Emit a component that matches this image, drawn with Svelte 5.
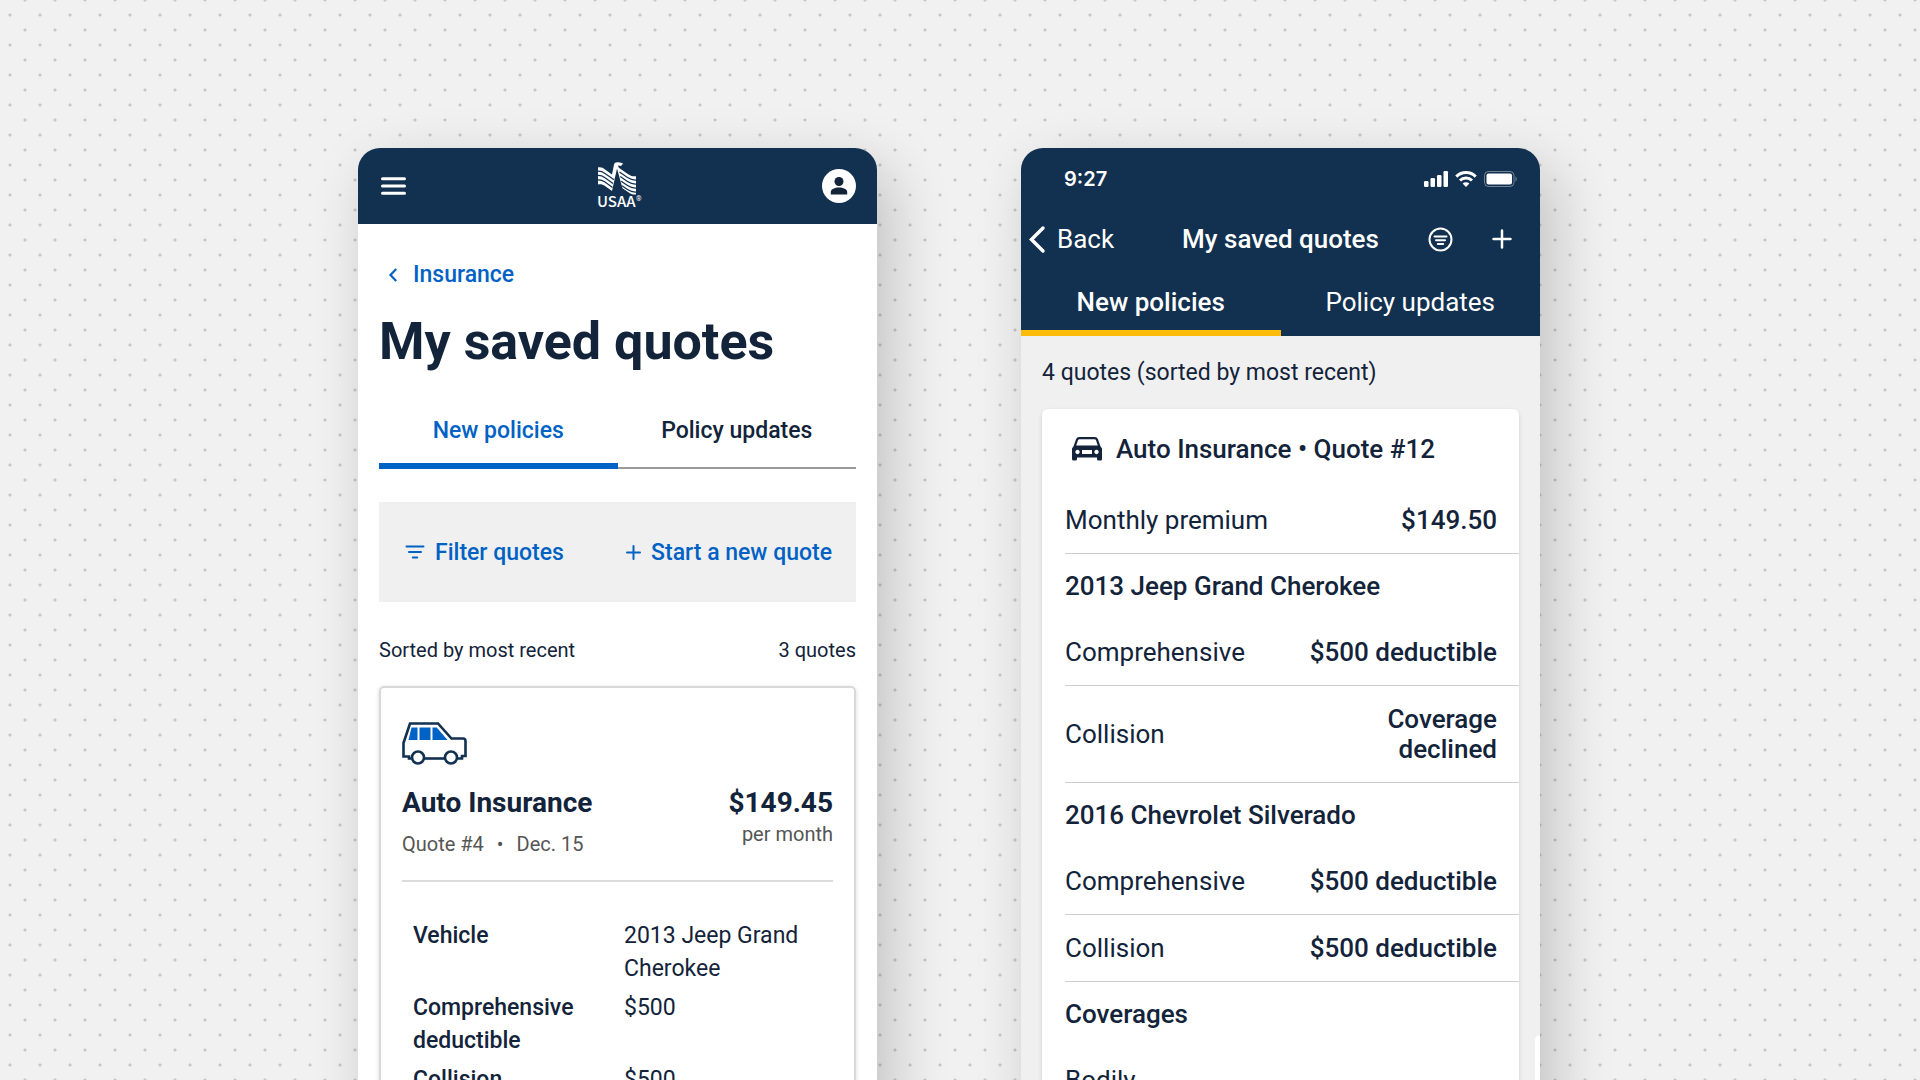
<script lang="ts">
	type Row = { label: string; value: string; wrap?: boolean };
	type Section = { title?: string; rows: Row[] };

	const tabs = ['New policies', 'Policy updates'];
	let webTab = $state(0);
	let appTab = $state(0);

	const details: Row[] = [
		{ label: 'Vehicle', value: '2013 Jeep Grand Cherokee' },
		{ label: 'Comprehensive deductible', value: '$500' },
		{ label: 'Collision deductible', value: '$500' }
	];

	const sections: Section[] = [
		{ rows: [{ label: 'Monthly premium', value: '$149.50' }] },
		{
			title: '2013 Jeep Grand Cherokee',
			rows: [
				{ label: 'Comprehensive', value: '$500 deductible' },
				{ label: 'Collision', value: 'Coverage declined', wrap: true }
			]
		},
		{
			title: '2016 Chevrolet Silverado',
			rows: [
				{ label: 'Comprehensive', value: '$500 deductible' },
				{ label: 'Collision', value: '$500 deductible' }
			]
		},
		{ title: 'Coverages', rows: [{ label: 'Bodily injury', value: '', wrap: true }] }
	];
</script>

<div class="stage">
	<section class="phone web">
		<header class="web-bar">
			<button class="icon-btn" aria-label="Menu">
				<svg width="25" height="18" viewBox="0 0 25 18" stroke="#fff" stroke-width="3" stroke-linecap="round">
					<path d="M1.5 1.7h22M1.5 9h22M1.5 16.3h22" />
				</svg>
			</button>
			<svg class="logo" width="44" height="48" viewBox="0 0 44 48" role="img" aria-label="USAA">
				<path fill="#fff" d="M1 5.5c3-.6 5 .5 7 1.900l7 5L17 2.500C17.500.8 19 0 21 .3c2.500.2 4 .5 5.500 2-1.500 0-2.300.5-2.100 1.700L21 3.500l.8 2.200 9 6.200c3 2 5.200 2.600 8.200 2.400v18.200c-3 .3-5-.5-8-2.500l-5.500-3.700L20 6.500l-5 22.400-7-4.900c-2-1.400-4-1.900-7-1.500z" />
				<g fill="none" stroke="#12304f" stroke-width="1.200">
					<path d="M0 9.300c3-.5 5.500.4 8 2.100l9 6.300M0 13.600c3-.5 5.500.4 8 2.100l8 5.700M0 18c3-.5 5.500.4 8 2.100l7.500 5.300" />
					<path d="M22.500 10l8 5.600c3 2 5.500 2.800 9 2.500M23.300 14.600l7.200 5c3 2 5.500 2.800 9 2.500M24.200 19.200l6.300 4.400c3 2 5.500 2.800 9 2.500M25 23.800l5.500 3.800c3 2 5.500 2.800 9 2.500" />
				</g>
				<text x="0" y="45" class="logo-name">USAA</text>
				<text x="39" y="39" class="logo-mark">®</text>
			</svg>
			<button class="icon-btn" aria-label="Profile">
				<svg width="34" height="34" viewBox="0 0 34 34">
					<circle cx="17" cy="17" r="17" fill="#fff" />
					<circle cx="17" cy="12.500" r="4.500" fill="#12233a" />
					<path fill="#12233a" d="M8.800 25.500v-2.500c0-3 4-4.500 8.200-4.500s8.200 1.500 8.200 4.500v2.500z" />
				</svg>
			</button>
		</header>

		<main class="web-main">
			<a class="crumb" href="#insurance">
				<svg width="8" height="14" viewBox="0 0 8 14" fill="none" stroke="currentColor" stroke-width="2.200">
					<path d="M7.200 1L1.500 7l5.700 6" />
				</svg>
				Insurance
			</a>
			<h1>My saved quotes</h1>

			<div class="web-tabs" role="tablist">
				{#each tabs as tab, i (tab)}
					<button role="tab" aria-selected={webTab === i} class:active={webTab === i} onclick={() => (webTab = i)}>{tab}</button>
				{/each}
			</div>

			<div class="toolbar">
				<button>
					<svg width="20" height="14" viewBox="0 0 20 14" fill="none" stroke="currentColor" stroke-width="2" stroke-linecap="round">
						<path d="M1.500 1.500h17M4 7h12M7.800 12.500h4.400" />
					</svg>
					Filter quotes
				</button>
				<button>
					<svg width="15" height="15" viewBox="0 0 15 15" fill="none" stroke="currentColor" stroke-width="2" stroke-linecap="round">
						<path d="M7.500 1v13M1 7.500h13" />
					</svg>
					Start a new quote
				</button>
			</div>

			<div class="sort">
				<span>Sorted by most recent</span>
				<span>3 quotes</span>
			</div>

			<article class="web-card">
				<svg width="65" height="43" viewBox="0 0 65 43" fill="none">
					<path fill="#0062c4" d="M9.500 5.500h6V18H6.500zM17.500 5.500h11V18h-11zM30.500 5.500h4.200L45.500 18h-15z" />
					<g stroke="#12304f" stroke-width="2.600">
						<path d="M9.500 36.500H7v-2H1.500V21L8 1.500h28l13.500 15H61q2.500 0 2.500 2.500v15H60v2.500h-5" />
						<path d="M22 36.500h21" />
						<circle cx="16" cy="35.500" r="6" />
						<circle cx="49" cy="35.500" r="6" />
					</g>
				</svg>
				<div class="summary">
					<div>
						<h2>Auto Insurance</h2>
						<p class="meta"><span>Quote #4</span><span>•</span><span>Dec. 15</span></p>
					</div>
					<div class="price">
						<strong>$149.45</strong>
						<span>per month</span>
					</div>
				</div>
				<dl class="details">
					{#each details as row (row.label)}
						<dt>{row.label}</dt>
						<dd>{row.value}</dd>
					{/each}
				</dl>
			</article>
		</main>
	</section>

	<section class="phone app">
		<header class="app-bar">
			<div class="status">
				<span>9:27</span>
				<div class="signals">
					<svg width="24" height="16" viewBox="0 0 24 16" fill="#fff">
						<rect x="0" y="10" width="4.500" height="6" rx="1.200" />
						<rect x="6.500" y="7" width="4.500" height="9" rx="1.200" />
						<rect x="13" y="4" width="4.500" height="12" rx="1.200" />
						<rect x="19.500" y="0" width="4.500" height="16" rx="1.200" />
					</svg>
					<svg width="22" height="16" viewBox="0 0 22 16" fill="none" stroke="#fff" stroke-width="3">
						<path d="M1.300 5.600a13.800 13.800 0 0 1 19.400 0M5 9.500a8.500 8.500 0 0 1 12 0" />
						<path fill="#fff" stroke="none" d="M11 16l-3.400-3.500a4.900 4.900 0 0 1 6.800 0z" />
					</svg>
					<svg width="34" height="16" viewBox="0 0 34 16">
						<rect x=".5" y=".5" width="29.500" height="15" rx="4" fill="none" stroke="#fff" stroke-opacity=".4" />
						<rect x="2.500" y="2.500" width="25.500" height="11" rx="2" fill="#fff" />
						<path d="M31.500 5.500c1.600.6 1.600 4.400 0 5z" fill="#fff" fill-opacity=".4" />
					</svg>
				</div>
			</div>

			<nav class="nav">
				<button class="back">
					<svg width="16" height="27" viewBox="0 0 16 27" fill="none" stroke="currentColor" stroke-width="3.500" stroke-linecap="round">
						<path d="M14 2L2.500 13.500 14 25" />
					</svg>
					Back
				</button>
				<h2>My saved quotes</h2>
				<div class="actions">
					<button class="icon-btn" aria-label="Filter">
						<svg width="25" height="25" viewBox="0 0 25 25" fill="none" stroke="#fff" stroke-width="2" stroke-linecap="round">
							<circle cx="12.500" cy="12.500" r="11" />
							<path d="M6.500 9.500h12M8 13.300h9M9.800 17h5.400" />
						</svg>
					</button>
					<button class="icon-btn" aria-label="New quote">
						<svg width="20" height="20" viewBox="0 0 20 20" fill="none" stroke="#fff" stroke-width="2.500" stroke-linecap="round">
							<path d="M10 1.500v17M1.500 10h17" />
						</svg>
					</button>
				</div>
			</nav>

			<div class="app-tabs" role="tablist">
				{#each tabs as tab, i (tab)}
					<button role="tab" aria-selected={appTab === i} class:active={appTab === i} onclick={() => (appTab = i)}>{tab}</button>
				{/each}
			</div>
		</header>

		<main class="app-main">
			<p class="count">4 quotes (sorted by most recent)</p>
			<article class="app-card">
				<h3 class="card-title">
					<svg width="30" height="24" viewBox="0 0 30 24">
						<path fill="#12233a" fill-rule="evenodd" d="M7.200 0h15.600q2.400 0 3.200 2.200L28.300 9 30 11.500V22q0 1.500-1.500 1.500h-2Q25 23.500 25 22v-1.500H5V22q0 1.500-1.500 1.500h-2Q0 23.500 0 22V11.500L1.700 9 4 2.200Q4.800 0 7.200 0zM7.400 2.200q-1 0-1.400 1L4.200 8.500h21.600L24 3.200q-.4-1-1.400-1zM10 13v4h10v-4zM5.500 12.800a2.200 2.200 0 1 0 .01 0zM24.500 12.800a2.200 2.200 0 1 0 .01 0z" />
					</svg>
					Auto Insurance • Quote #12
				</h3>
				{#each sections as section, i (i)}
					{#if section.title}
						<h4>{section.title}</h4>
					{/if}
					<dl class="rows">
						{#each section.rows as row (row.label)}
							<div class="row" class:wrap={row.wrap}>
								<dt>{row.label}</dt>
								<dd>{row.value}</dd>
							</div>
						{/each}
					</dl>
				{/each}
			</article>
		</main>
		<span class="side-sheet"></span>
	</section>
</div>

<style>
	:global(body) { margin: 0; overflow: hidden; }
	* { box-sizing: border-box; }
	h1, h2, h3, h4, p, dl, dd { margin: 0; }
	svg { display: block; flex: none; overflow: visible; }
	button { padding: 0; border: 0; background: none; color: inherit; font: inherit; cursor: pointer; }

	.stage {
		display: flex;
		justify-content: center;
		align-items: flex-start;
		gap: 144px;
		height: 100vh;
		padding: 148px 22px 0 0;
		overflow: hidden;
		background-color: #f1f1f1;
		background-image: radial-gradient(circle, #c6c6c6 1px, transparent 2px), radial-gradient(circle, #c6c6c6 1px, transparent 2px);
		background-size: 30px 30px;
		background-position: -5px 0, 10px 15px;
		color: #12233a;
		font-family: Roboto, 'Liberation Sans', sans-serif;
		font-size: 23px;
	}

	.phone {
		position: relative;
		flex: 0 1 519px;
		overflow: hidden;
		border-radius: 22px 22px 0 0;
		background: #fff;
		box-shadow: 14px 20px 60px rgba(0, 0, 0, 0.2);
	}
	.icon-btn { display: flex; }

	/* mobile web */
	.web-bar { display: grid; grid-template-columns: 1fr auto 1fr; align-items: center; height: 76px; padding: 0 21px 0 23px; background: #12304f; }
	.web-bar .icon-btn:last-child { justify-self: end; }
	.logo-name { fill: #fff; font: 500 15px 'Noto Sans CJK JP', sans-serif; }
	.logo-mark { fill: #fff; font-size: 7px; }

	.web-main { padding: 36px 21px; }
	.crumb { display: flex; align-items: center; gap: 16px; padding-left: 10px; line-height: 30px; color: #0062c4; font-weight: 500; text-decoration: none; }
	h1 { margin-top: 22px; font-size: 52px; line-height: 60px; font-weight: 700; }

	.web-tabs { display: flex; margin-top: 25px; box-shadow: inset 0 -2px #999; }
	.web-tabs button { flex: 1; height: 72px; border-bottom: 6px solid transparent; font-weight: 500; }
	.web-tabs .active { border-color: #0062c4; color: #0062c4; }

	.toolbar { display: flex; justify-content: space-between; align-items: center; height: 100px; margin-top: 33px; padding: 0 24px 0 26px; background: #f0f0f0; color: #0062c4; font-weight: 500; }
	.toolbar button { display: flex; align-items: center; gap: 10px; }

	.sort { display: flex; justify-content: space-between; margin-top: 33px; font-size: 20px; line-height: 30px; }

	.web-card { margin-top: 21px; padding: 34px 21px; border: 2px solid #d9d9d9; border-radius: 5px; box-shadow: 0 1px 4px rgba(0, 0, 0, 0.15); }
	.summary { display: flex; justify-content: space-between; margin-top: 20px; padding-bottom: 23px; border-bottom: 2px solid #dcdcdc; }
	.summary h2, .price strong { font-size: 28px; line-height: 36px; font-weight: 700; }
	.price { display: flex; flex-direction: column; align-items: flex-end; }
	.price span, .meta { color: #555; font-size: 20px; line-height: 26px; }
	.meta { display: flex; gap: 13px; margin-top: 10px; }

	.details { display: grid; grid-template-columns: 181px 1fr; gap: 6px 30px; padding: 37px 0 0 11px; line-height: 33px; }
	.details dt { font-weight: 500; }

	/* native app */
	.app { background: #f0f0f0; }
	.app-bar { background: #12304f; color: #fff; font-size: 26px; }
	.status { display: flex; justify-content: space-between; align-items: center; height: 62px; padding: 0 22px 0 43px; font: 600 20px Inter, sans-serif; }
	.signals { display: flex; gap: 7px; }
	.nav { display: grid; grid-template-columns: 1fr auto 1fr; align-items: center; height: 58px; padding: 0 8px; }
	.nav h2 { font-size: 26px; font-weight: 500; }
	.back { display: flex; align-items: center; gap: 12px; }
	.actions { display: flex; justify-content: flex-end; align-items: center; gap: 39px; padding-right: 20px; }
	.app-tabs { display: flex; }
	.app-tabs button { flex: 1; height: 68px; padding-top: 6px; border-bottom: 6px solid transparent; }
	.app-tabs .active { border-color: #fdbb0a; font-weight: 500; }

	.app-main { padding: 22px 21px; }
	.count { line-height: 30px; }
	.app-card { margin-top: 21px; padding-left: 23px; border-radius: 6px; background: #fff; box-shadow: 0 2px 4px rgba(0, 0, 0, 0.15); font-size: 26px; line-height: 30px; }
	.card-title { display: flex; align-items: center; gap: 14px; height: 78px; padding: 2px 0 0 7px; font-size: 26px; font-weight: 500; }
	.app-card h4 { padding: 17px 0 18px; font-size: 26px; font-weight: 500; }
	.row { display: flex; justify-content: space-between; align-items: center; padding: 18px 22px 18px 0; border-bottom: 1px solid #ccc; }
	.row dd { font-weight: 500; text-align: right; }
	.wrap dd { width: 120px; }
	.app-card dl:last-child dt { width: 90px; }

	/* edge of the sheet that slides in over the list */
	.side-sheet { position: absolute; top: 887px; right: 0; width: 5px; height: 100px; border-radius: 5px 0 0 0; background: #fff; }
</style>
